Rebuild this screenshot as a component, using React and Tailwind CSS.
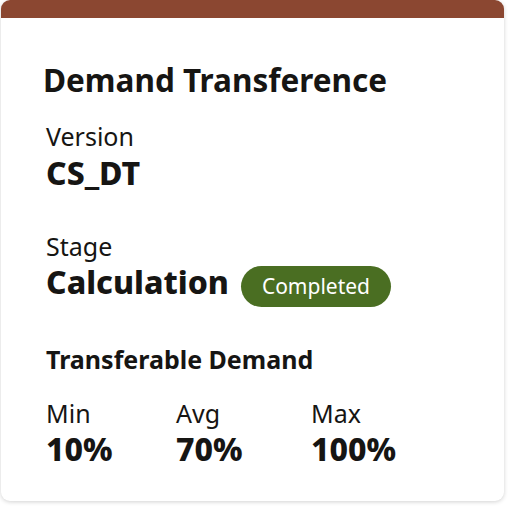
export default function App() {
  const stats = [
    { label: 'Min', value: '10%', w: 'w-[130px]' },
    { label: 'Avg', value: '70%', w: 'w-[135px]' },
    { label: 'Max', value: '100%', w: 'w-[130px]' },
  ];

  return (
    <div className="w-[519px] h-[510px] bg-white" style={{ fontFamily: '"Noto Sans", "Open Sans", sans-serif' }}>
      <div className="ml-[1px] w-[503px] h-[501px] rounded-[9px] bg-white shadow-[0_1px_4px_rgba(0,0,0,0.18)] overflow-hidden flex flex-col text-[#161513]">
        <div className="h-[18px] bg-[#8b4731]" />
        <div className="pl-[43px] pt-[44px] flex flex-col">
          <h1 className="-ml-[1px] text-[31.5px] leading-[36px] font-bold">Demand Transference</h1>

          <div className="mt-[23px] pl-[2px]">
            <div className="text-[25px] leading-[30px]">Version</div>
            <div className="mt-[4px] text-[32px] leading-[36px] font-extrabold">CS_DT</div>
          </div>

          <div className="mt-[40px] pl-[2px]">
            <div className="text-[25px] leading-[30px]">Stage</div>
            <div className="flex items-baseline gap-[12px]">
              <span className="text-[32px] leading-[41px] font-extrabold">Calculation</span>
              <span className="h-[41px] px-[21px] rounded-full bg-[#4a6e22] text-white text-[21px] leading-[41px]">
                Completed
              </span>
            </div>
          </div>

          <div className="mt-[37px] pl-[2px]">
            <div className="text-[25px] leading-[30px] font-bold">Transferable Demand</div>
            <div className="mt-[24px] flex">
              {stats.map((s) => (
                <div key={s.label} className={s.w}>
                  <div className="text-[25px] leading-[30px]">{s.label}</div>
                  <div className="mt-[3px] text-[32px] leading-[36px] font-extrabold">{s.value}</div>
                </div>
              ))}
            </div>
          </div>
        </div>
      </div>
    </div>
  );
}
